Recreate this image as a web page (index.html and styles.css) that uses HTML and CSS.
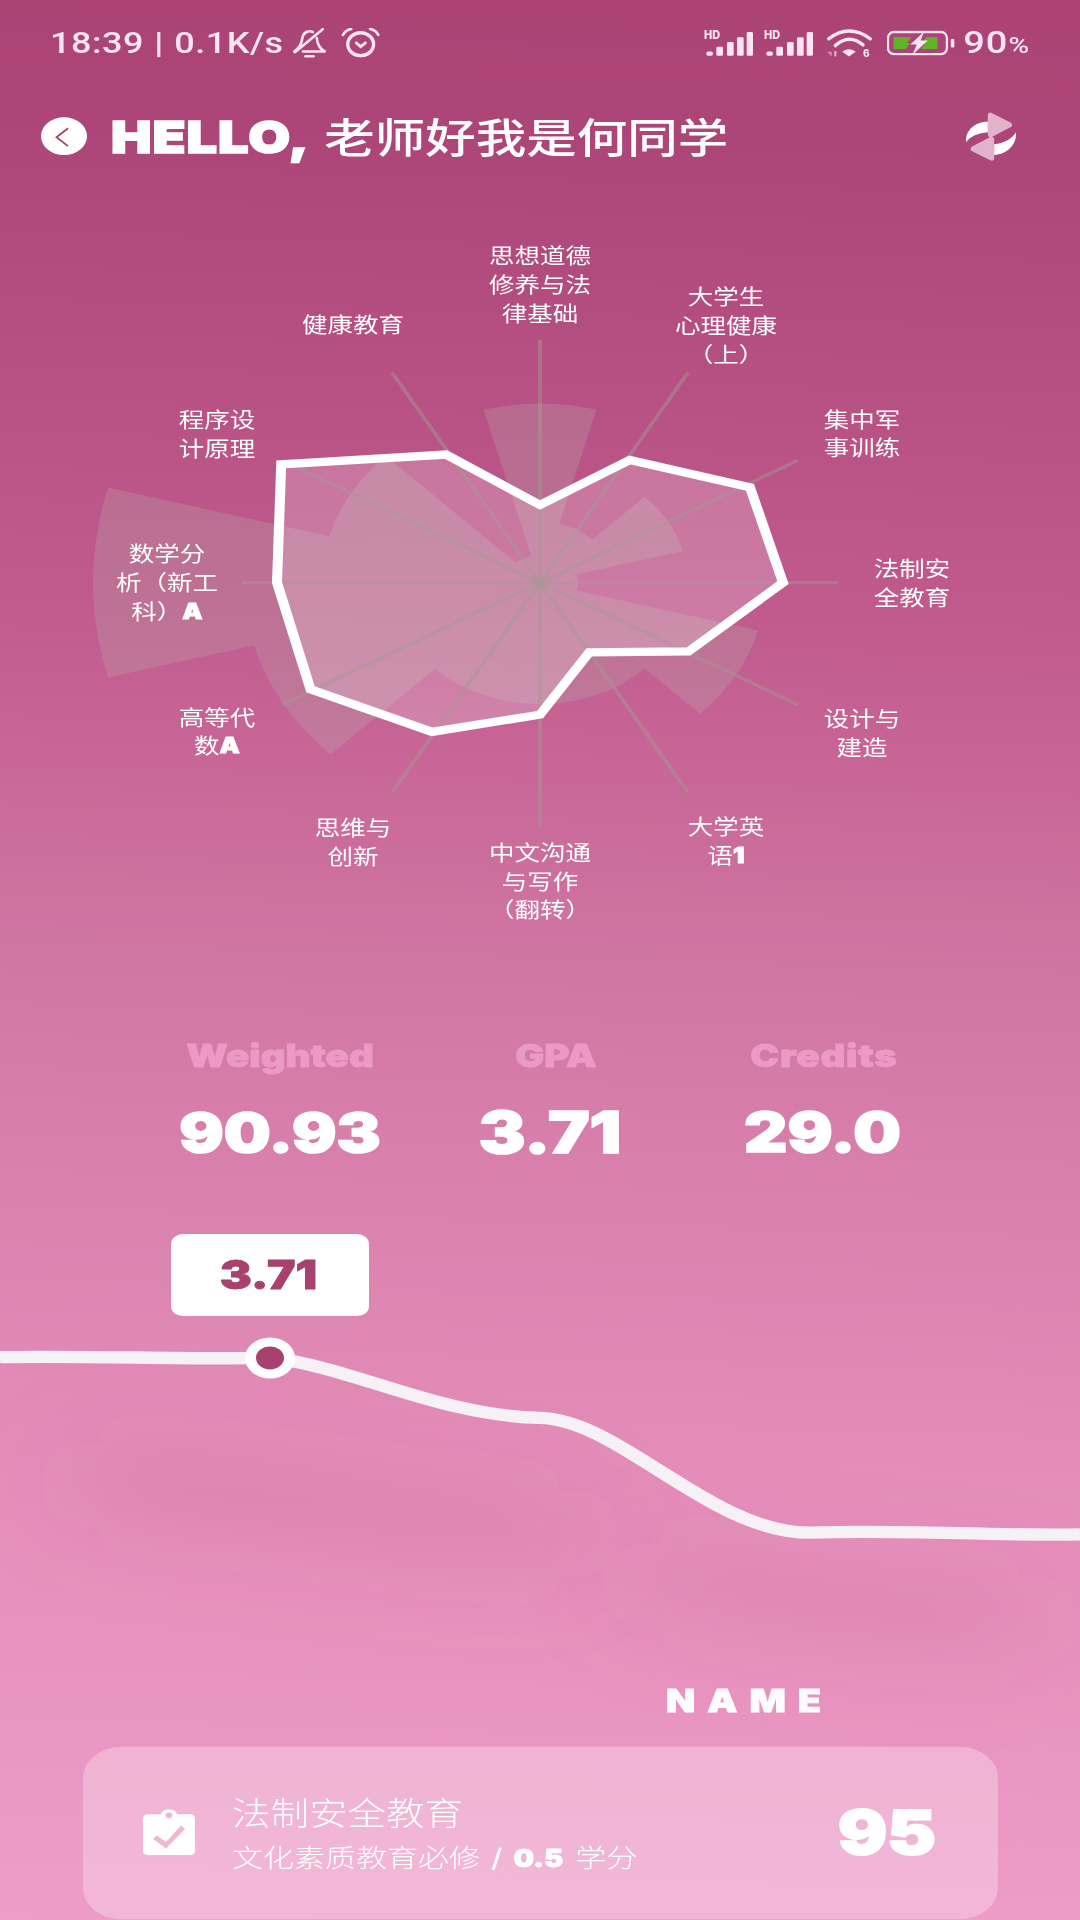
FILE: index.html
```html
<!DOCTYPE html>
<html lang="zh-CN">
<head>
<meta charset="utf-8">
<title>Grades</title>
<link rel="stylesheet" href="styles.css">
</head>
<body>
<div class="frame">
<main class="app">
  <div class="status">
    <div class="status-left">
      <span class="status-text">18:39 <b class="sep">|</b> 0.1K/s</span>
      <svg class="ic-bell" viewBox="0 0 100 90" preserveAspectRatio="none"><g fill="none" stroke="#fce4f0" stroke-width="8" stroke-linecap="round" stroke-linejoin="round"><path d="M4 70 C18 60 26 50 28 32 C30 14 46 6 60 12"/><path d="M72 30 C74 50 82 62 96 70 L30 70"/><path d="M6 72 L90 4"/><path d="M38 84 H62"/></g></svg>
      <svg class="ic-alarm" viewBox="0 0 115 85" preserveAspectRatio="none"><g fill="none" stroke="#fce4f0" stroke-width="8" stroke-linecap="round"><ellipse cx="58" cy="47" rx="38" ry="33" stroke-width="10"/><path d="M6 20 C12 10 20 5 30 3"/><path d="M110 20 C104 10 96 5 86 3"/><path d="M45 43 L58 54 L72 43"/></g></svg>
    </div>
    <div class="status-right">
      <svg class="ic-signal" viewBox="0 0 147 75" preserveAspectRatio="none"><text x="0" y="26" class="hd">HD</text><g fill="#fce4f0"><rect x="7" y="62" width="20" height="13" rx="6"/><rect x="37" y="48" width="20" height="27" rx="4"/><rect x="69" y="34" width="20" height="41" rx="4"/><rect x="99" y="20" width="20" height="55" rx="4"/><rect x="128" y="5" width="19" height="70" rx="4"/></g></svg>
      <svg class="ic-signal" viewBox="0 0 147 75" preserveAspectRatio="none"><text x="0" y="26" class="hd">HD</text><g fill="#fce4f0"><rect x="7" y="62" width="20" height="13" rx="6"/><rect x="37" y="48" width="20" height="27" rx="4"/><rect x="69" y="34" width="20" height="41" rx="4"/><rect x="99" y="20" width="20" height="55" rx="4"/><rect x="128" y="5" width="19" height="70" rx="4"/></g></svg>
      <svg class="ic-wifi" viewBox="0 0 135 85" preserveAspectRatio="none"><g fill="none" stroke="#fce4f0" stroke-width="10" stroke-linecap="round"><path d="M5 30 Q66 -16 130 30"/><path d="M25 50 Q66 14 108 48"/></g><path d="M46 68 Q66 54 86 68 L66 82Z" fill="#fce4f0"/><path d="M0 68 L14 68 L14 82Z" fill="#d88fb6"/><rect x="22" y="66" width="6" height="16" fill="#e7b6d0"/><text x="108" y="85" class="six">6</text></svg>
      <svg class="ic-batt" viewBox="0 0 210 76" preserveAspectRatio="none"><rect x="3" y="5" width="182" height="66" rx="18" fill="none" stroke="#fce4f0" stroke-width="7"/><rect x="197" y="26" width="11" height="25" rx="3" fill="#fce4f0"/><path d="M20 20 H76 L60 38 H72 L58 56 H20Z" fill="#5eb424"/><path d="M122 20 H156 V56 H104 L118 40 H104Z" fill="#5eb424"/><path d="M114 4 L72 42 H92 L78 74 L126 30 H104Z" fill="#fce4f0"/></svg>
      <span class="status-text batt-text">90<small>%</small></span>
    </div>
  </div>

  <header class="header">
    <div class="header-left">
      <button class="back" type="button"><svg viewBox="0 0 46 38" preserveAspectRatio="none"><path d="M27 11 L15.500 20 L27 29" fill="none" stroke="#a8416f" stroke-width="1.8"/></svg></button>
      <h1 class="title"><span class="heavy hello">HELLO,</span> 老师好我是何同学</h1>
    </div>
    <svg class="ic-refresh" viewBox="0 0 155 150" preserveAspectRatio="none">
      <path d="M76 11 L132 40 L76 69Z" fill="#e2b2cb" stroke="#e2b2cb" stroke-width="16" stroke-linejoin="round"/>
      <path d="M79 83 L79 139 L25 112Z" fill="#e2b2cb" stroke="#e2b2cb" stroke-width="16" stroke-linejoin="round"/>
      <path d="M68 30 C30 32 1 55 3 92 C15 74 40 64 68 62Z" fill="#fff"/>
      <path d="M87 130 C125 128 155 100 152 62 C140 82 115 95 87 98Z" fill="#fff"/>
    </svg>
  </header>

  <section class="radar">
    <svg class="radar-svg" viewBox="0 0 1080 960">
      <g transform="translate(540 504)">
        <g class="wedges">
          <path d="M0 0L-56.4 -210.6A218 218 0 0 1 56.4 -210.6Z"/>
          <path transform="rotate(30)" d="M0 0L-19.2 -71.5A74 74 0 0 1 19.2 -71.5Z"/>
          <path transform="rotate(60)" d="M0 0L-38.3 -143A148 148 0 0 1 38.3 -143Z"/>
          <path transform="rotate(90)" d="M0 0L-9.8 -36.7A38 38 0 0 1 9.8 -36.7Z"/>
          <path transform="rotate(120)" d="M0 0L-58.5 -218.3A226 226 0 0 1 58.5 -218.3Z"/>
          <path transform="rotate(150)" d="M0 0L-38.3 -143A148 148 0 0 1 38.3 -143Z"/>
          <path transform="rotate(180)" d="M0 0L-38.3 -143A148 148 0 0 1 38.3 -143Z"/>
          <path transform="rotate(210)" d="M0 0L-38.3 -143A148 148 0 0 1 38.3 -143Z"/>
          <path transform="rotate(240)" d="M0 0L-76.6 -285.9A296 296 0 0 1 76.6 -285.9Z"/>
          <path transform="rotate(270)" d="M0 0L-115.7 -431.8A447 447 0 0 1 115.7 -431.8Z"/>
          <path transform="rotate(300)" d="M0 0L-56.4 -210.6A218 218 0 0 1 56.4 -210.6Z"/>
          <path transform="rotate(330)" d="M0 0L-8.8 -32.8A34 34 0 0 1 8.8 -32.8Z"/>
        </g>
        <polygon class="score-fill" points="0,-94.6 89.8,-149.4 210,-116 243,0 148.5,84 49.3,85 0,161 -108,182 -229.5,130 -263,0 -258.8,-144 -94,-156"/>
        <g class="spokes">
          <line x1="0" y1="0" x2="0" y2="-296"/>
          <line x1="0" y1="0" x2="148" y2="-256"/>
          <line x1="0" y1="0" x2="258" y2="-149"/>
          <line x1="0" y1="0" x2="298" y2="0"/>
          <line x1="0" y1="0" x2="258" y2="149"/>
          <line x1="0" y1="0" x2="148" y2="256"/>
          <line x1="0" y1="0" x2="0" y2="296"/>
          <line x1="0" y1="0" x2="-148" y2="256"/>
          <line x1="0" y1="0" x2="-258" y2="149"/>
          <line x1="0" y1="0" x2="-298" y2="0"/>
          <line x1="0" y1="0" x2="-258" y2="-149"/>
          <line x1="0" y1="0" x2="-148" y2="-256"/>
        </g>
        <polygon class="score-line" points="0,-94.6 89.8,-149.4 210,-116 243,0 148.5,84 49.3,85 0,161 -108,182 -229.5,130 -263,0 -258.8,-144 -94,-156"/>
      </g>
    </svg>
    <div class="lbl l0">思想道德<br>修养与法<br>律基础</div>
    <div class="lbl l1">大学生<br>心理健康<br>（上）</div>
    <div class="lbl l2">集中军<br>事训练</div>
    <div class="lbl l3">法制安<br>全教育</div>
    <div class="lbl l4">设计与<br>建造</div>
    <div class="lbl l5">大学英<br>语<span class="heavy">1</span></div>
    <div class="lbl l6">中文沟通<br>与写作<br>（翻转）</div>
    <div class="lbl l7">思维与<br>创新</div>
    <div class="lbl l8">高等代<br>数<span class="heavy">A</span></div>
    <div class="lbl l9">数学分<br>析（新工<br>科）<span class="heavy">A</span></div>
    <div class="lbl l10">程序设<br>计原理</div>
    <div class="lbl l11">健康教育</div>
  </section>

  <section class="stats">
    <div class="stat s1"><div class="stat-label">Weighted</div><div class="stat-value">90.93</div></div>
    <div class="stat s2"><div class="stat-label lbl-gpa">GPA</div><div class="stat-value">3.71</div></div>
    <div class="stat s3"><div class="stat-label">Credits</div><div class="stat-value">29.0</div></div>
  </section>

  <section class="chart">
    <svg class="chart-svg" viewBox="0 1480 1080 560">
      <defs><filter id="soft" filterUnits="userSpaceOnUse" x="-300" y="1400" width="1700" height="940"><feGaussianBlur stdDeviation="55"/></filter></defs>
      <path class="curve-shadow" filter="url(#soft)" d="M120 1810 C180 1815 240 1825 300 1835 C380 1850 460 1865 540 1870"/>
      <path class="curve-shadow" filter="url(#soft)" d="M680 1930 C760 1950 860 1965 1000 1975"/>
      <path class="curve" d="M0 1654 C90 1652 180 1657 270 1655 C350 1665 440 1726 540 1728 C620 1730 710 1868 810 1868 C900 1864 990 1872 1080 1870"/>
      <circle class="dot-ring" cx="270" cy="1655" r="25"/>
      <circle class="dot-core" cx="270" cy="1655" r="14"/>
    </svg>
    <div class="tooltip heavy">3.71</div>
  </section>

  <div class="name heavy">NAME</div>

  <article class="card">
    <svg class="ic-clip" viewBox="0 0 52 56" preserveAspectRatio="none"><path fill-rule="evenodd" d="M5 6 H18 C19 1 23 0 26 0 C29 0 33 1 34 6 H47 C50 6 52 8 52 11 V51 C52 54 50 56 47 56 H5 C2 56 0 54 0 51 V11 C0 8 2 6 5 6Z M26 4 C24 4 22.500 5.500 22.500 7.500 C22.500 9.500 24 11 26 11 C28 11 29.500 9.500 29.500 7.500 C29.500 5.500 28 4 26 4Z M42 24 L38 20 L23 40 L14 32 L10 36 L23 48Z" fill="#fff"/></svg>
    <div class="card-text">
      <div class="card-title">法制安全教育</div>
      <div class="card-sub">文化素质教育必修<span class="slash">/</span><span class="heavy sub-num">0.5</span>学分</div>
    </div>
    <div class="score heavy">95</div>
  </article>
</main>
</div>
</body>
</html>
```
FILE: styles.css
```css
* { box-sizing: border-box; margin: 0; padding: 0; }
html, body { width: 1080px; height: 1920px; overflow: hidden; background: #ec9ac4; }
body { font-family: "Noto Sans CJK SC", "Noto Sans", sans-serif; color: #fff; }

.frame { width: 1080px; height: 1920px; overflow: hidden; }

/* The capture is a 1080x2340 phone screen squeezed to 1920 high */
.app {
  width: 1080px;
  height: 2340px;
  transform: scaleY(0.8205);
  transform-origin: 0 0;
  display: flex;
  flex-direction: column;
  background: linear-gradient(182deg, #ab4375 0%, #ad4678 8%, #c15a8d 32%, #d076a3 50%, #e48db9 75%, #ee9cc8 100%);
}

.heavy { font-family: Inter, "Liberation Sans", sans-serif; font-weight: 900; -webkit-text-stroke: 1px currentColor; }

/* status bar */
.status {
  height: 104px;
  padding: 0 50px;
  display: flex;
  align-items: center;
  justify-content: space-between;
  color: #fce4f0;
}
.status-left, .status-right { display: flex; align-items: center; }
.status-text { font-family: Roboto, sans-serif; font-size: 36px; font-weight: 500; letter-spacing: 0.5px; white-space: nowrap; }
.sep { font-weight: 700; margin: 0 1px; }
.ic-bell { width: 33px; height: 37px; margin-left: 9px; }
.ic-alarm { width: 39px; height: 36px; margin-left: 15px; }
.ic-signal { width: 49px; height: 31px; margin-right: 11px; overflow: visible; }
.ic-wifi { width: 45px; height: 35px; margin-left: 3px; margin-right: 15px; overflow: visible; }
.ic-batt { width: 68px; height: 31px; margin-right: 8px; }
.batt-text { font-size: 38px; letter-spacing: 1px; }
.batt-text small { font-size: 28px; }
.hd { font: 800 33px Inter, sans-serif; fill: #fce4f0; }
.six { font: 800 30px Inter, sans-serif; fill: #fce4f0; }

/* header */
.header {
  margin-top: 22px;
  height: 80px;
  padding: 0 63px 0 41px;
  display: flex;
  align-items: center;
  justify-content: space-between;
}
.header-left { display: flex; align-items: center; gap: 24px; }
.back { width: 46px; height: 46px; border: 0; border-radius: 50%; background: #fff; display: block; }
.back svg { width: 46px; height: 46px; display: block; }
.title { font-size: 50.500px; font-weight: 500; line-height: 84px; white-space: nowrap; }
.hello { font-size: 54px; letter-spacing: 1px; margin-right: 3px; -webkit-text-stroke: 2px #fff; }
.ic-refresh { width: 52px; height: 61px; }

/* radar */
.radar { position: relative; height: 960px; }
.radar-svg { position: absolute; left: 0; top: 0; width: 1080px; height: 960px; }
.wedges path { fill: #b4b8ad; fill-opacity: 0.25; }
.spokes line { stroke: #a39894; stroke-opacity: 0.48; stroke-width: 4; }
.score-fill { fill: #fff; fill-opacity: 0.2; }
.score-line { fill: none; stroke: #fff; stroke-width: 10; stroke-linejoin: miter; }
.lbl { position: absolute; width: 200px; font-size: 25.500px; line-height: 35px; text-align: center; white-space: nowrap; }
.l0 { left: 440px; top: 86px; }
.l1 { left: 626px; top: 136px; }
.l2 { left: 762px; top: 285px; }
.l3 { left: 812px; top: 467px; }
.l4 { left: 762px; top: 650px; }
.l5 { left: 626px; top: 782px; }
.l6 { left: 440px; top: 813px; }
.l7 { left: 253px; top: 783px; }
.l8 { left: 117px; top: 648px; }
.l9 { left: 67px; top: 449px; }
.l10 { left: 117px; top: 286px; }
.l11 { left: 253px; top: 170px; }

/* stats */
.stats { margin-top: 95px; padding-left: 144px; display: flex; }
.stat { width: 272px; text-align: center; font-family: Inter, "Liberation Sans", sans-serif; font-weight: 900; }
.stat-label { font-size: 38.500px; line-height: 50px; color: #ea9ac4; -webkit-text-stroke: 1px #ea9ac4; }
.lbl-gpa { padding-left: 8px; }
.s3 .stat-label { letter-spacing: 0.8px; }
.s2 .stat-value { padding-right: 4px; font-size: 70px; }
.s3 .stat-value { padding-right: 3px; font-size: 67px; }
.stat-value { margin-top: 24px; font-size: 66px; line-height: 90px; color: #fff; -webkit-text-stroke: 2px #fff; }

/* chart */
.chart { position: relative; margin-top: 55px; height: 560px; }
.chart-svg { position: absolute; left: 0; top: 0; width: 1080px; height: 560px; overflow: visible; }
.curve { fill: none; stroke: #f6f1f5; stroke-width: 15; }
.curve-shadow { fill: none; stroke: #a8416f; stroke-opacity: 0.13; stroke-width: 110; stroke-linecap: round; }
.dot-ring { fill: #fff; }
.dot-core { fill: #a8416f; }
.tooltip {
  position: absolute;
  left: 171px;
  top: 24px;
  width: 198px;
  height: 100px;
  border-radius: 12px;
  background: #fff;
  color: #a8416f;
  font-size: 48px;
  line-height: 100px;
  text-align: center;
  padding-right: 3px;
}

/* name */
.name { height: 60px; padding-top: 3px; margin-left: 666px; font-size: 38px; line-height: 60px; letter-spacing: 12px; white-space: nowrap; }

/* card */
.card {
  margin: 29px 82px 0 83px;
  height: 210px;
  padding: 0 62px 0 60px;
  border-radius: 38px;
  background: rgba(255, 255, 255, 0.28);
  display: flex;
  align-items: center;
}
.ic-clip { width: 52px; height: 56px; flex: none; margin-top: -3px; }
.card-text { margin-left: 37px; flex: 1; }
.card-title { font-size: 38.500px; line-height: 50px; font-weight: 300; }
.card-sub { margin-top: 8px; font-size: 31px; line-height: 44px; font-weight: 300; white-space: nowrap; }
.slash { font-family: Inter, sans-serif; font-weight: 500; margin: 0 11px; }
.sub-num { font-size: 29px; margin-right: 12px; }
.score { font-size: 73px; line-height: 80px; -webkit-text-stroke: 2.500px #fff; }
```
